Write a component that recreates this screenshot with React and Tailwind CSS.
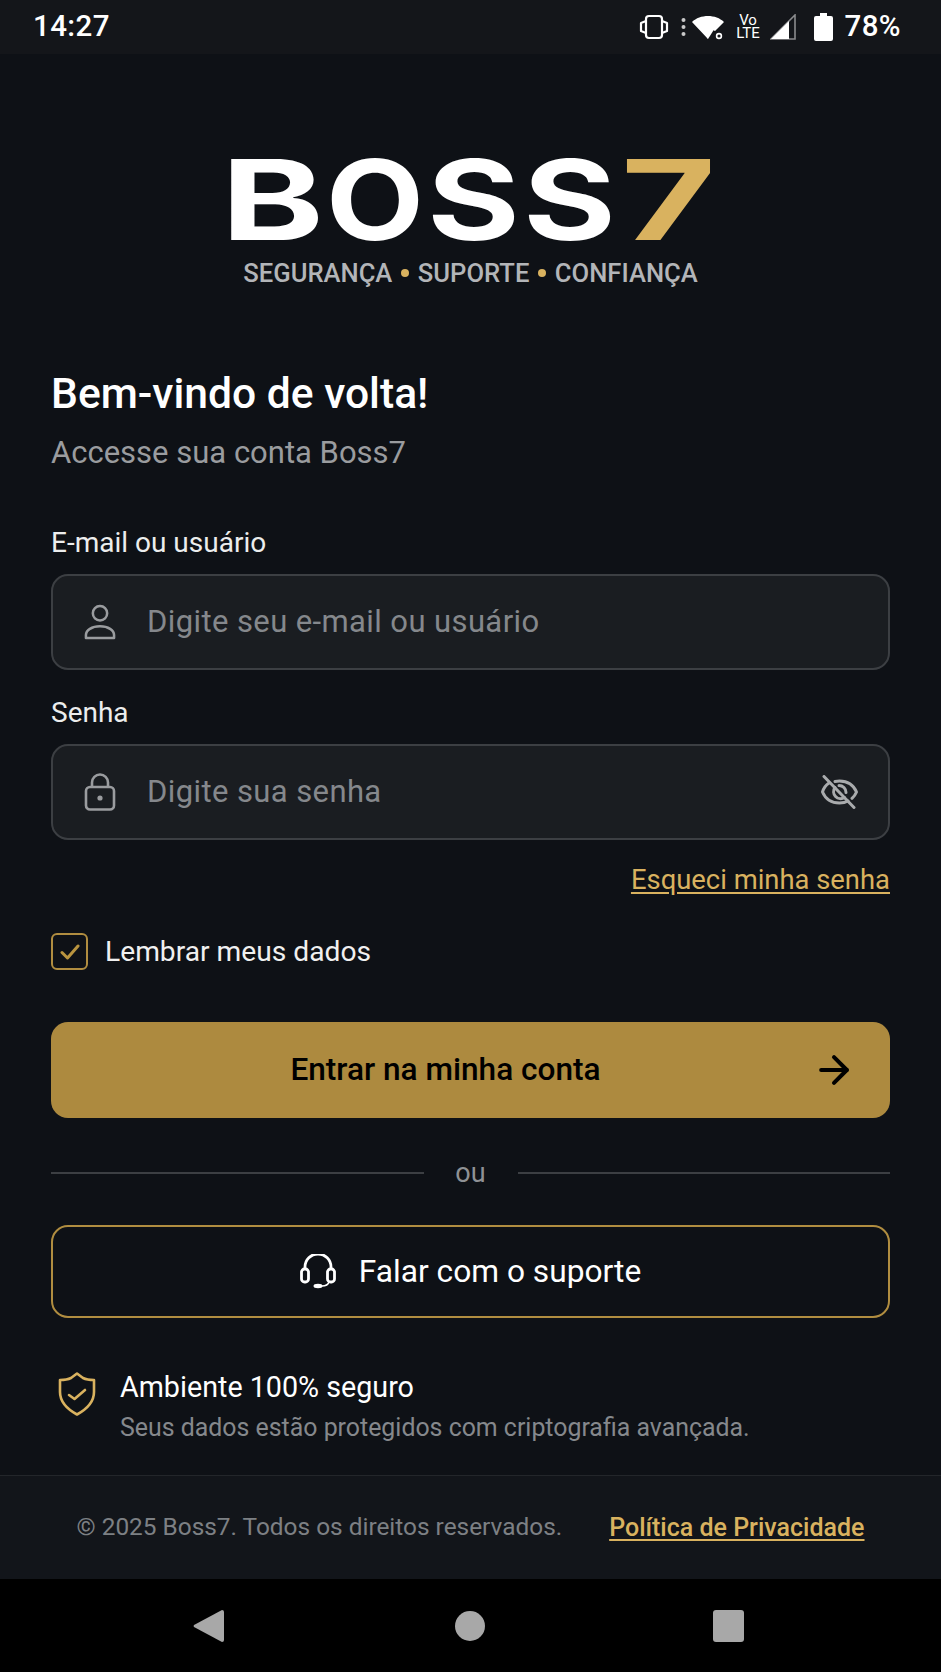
import { ArrowRight } from "lucide-react";

const GOLD = "#d9b25f";

function StatusBar() {
  return (
    <div className="h-[54px] shrink-0 bg-[#14161a] flex items-center justify-between pl-[33px] pr-[40px] text-white">
      <span className="text-[29.5px] leading-none font-medium tracking-[0.4px]">14:27</span>
      <div className="flex items-center">
        <svg width="30" height="26" viewBox="0 0 30 26" fill="none" stroke="white" strokeWidth="2.2">
          <rect x="7" y="2" width="16" height="22" rx="3" />
          <path d="M7 7 2 9v8l5 2M23 7l5 2v8l-5 2" strokeLinejoin="round" />
        </svg>
        <svg className="ml-[12px]" width="5" height="20" viewBox="0 0 5 20" fill="#c9c9c9">
          <circle cx="2.5" cy="3" r="2" />
          <circle cx="2.5" cy="10" r="2" />
          <circle cx="2.5" cy="17" r="2" />
        </svg>
        <svg className="ml-[5px]" width="34" height="26" viewBox="0 0 34 26" fill="white">
          <path d="M1 8C9 0 25 0 33 8L24 17A10 10 0 0 0 17 15V25Z" />
          <path d="M17 25 10 14Q17 9 24 14L17 25Z" />
          <circle cx="28" cy="22" r="2.4" fill="none" stroke="white" strokeWidth="1.6" />
        </svg>
        <div className="ml-[9px] w-[29px] flex flex-col items-center text-[15px] leading-[13px]">
          <span>Vo</span>
          <span>LTE</span>
        </div>
        <svg className="ml-[7px]" width="27" height="26" viewBox="0 0 27 26">
          <path d="M1 25 25 1V25Z" fill="none" stroke="#8a8b8d" strokeWidth="1.6" />
          <path d="M1 25 19 7V25Z" fill="white" />
        </svg>
        <svg className="ml-[17px]" width="19" height="28" viewBox="0 0 19 28" fill="white">
          <path d="M6 0h7v3h4a2 2 0 0 1 2 2v21a2 2 0 0 1-2 2H2a2 2 0 0 1-2-2V5a2 2 0 0 1 2-2h4Z" />
        </svg>
        <span className="ml-[12px] text-[29.5px] leading-none font-medium tracking-[0.4px]">78%</span>
      </div>
    </div>
  );
}

// wordmark: each letter is stretched to the slot it has in the logo
function Logo() {
  const letters = [
    { c: "B", x: -8, w: 103 },
    { c: "O", x: 97, w: 98 },
    { c: "S", x: 198, w: 93 },
    { c: "S", x: 294, w: 93 },
  ];
  return (
    <svg width="503" height="140" viewBox="-10 -30 503 140" className="block" role="img" aria-label="BOSS7">
      <g fontFamily="Inter, sans-serif" fontWeight="700" fontSize="111">
        {letters.map((l) => (
          <text
            key={l.x}
            x={l.x}
            y="81"
            fill="#ffffff"
            textLength={l.w}
            lengthAdjust="spacingAndGlyphs"
          >
            {l.c}
          </text>
        ))}
        <text x="392" y="81" fill={GOLD} textLength="95" lengthAdjust="spacingAndGlyphs">
          7
        </text>
      </g>
    </svg>
  );
}

function Dot() {
  return <span className="mx-[9px] w-[7.5px] h-[7.5px] rounded-full bg-[#d9b25f]" />;
}

function Field({ label, placeholder, icon, trailing }) {
  return (
    <div>
      <label className="block text-[28px] leading-[32px] text-[#eceded]">{label}</label>
      <div className="mt-[15px] h-[96px] rounded-[17px] border-2 border-[#3c3f43] bg-[#1a1d21] flex items-center pl-[31px] pr-[30px]">
        <span className="w-[32px] flex justify-center shrink-0">{icon}</span>
        <input
          placeholder={placeholder}
          className="ml-[31px] flex-1 min-w-0 bg-transparent outline-none text-[31px] tracking-[0.4px] text-white placeholder:text-[#85888c]"
        />
        {trailing}
      </div>
    </div>
  );
}

function UserIcon() {
  return (
    <svg width="33" height="36" viewBox="0 0 33 36" fill="none" stroke="#9a9c9f" strokeWidth="2.6" strokeLinejoin="round">
      <circle cx="16.5" cy="9" r="7.4" />
      <path d="M2 34.500v-3c0-5 6-9 14.500-9S31 26.500 31 31.500v3Z" />
    </svg>
  );
}

function LockIcon() {
  return (
    <svg width="32" height="38" viewBox="0 0 32 38" fill="none" stroke="#9a9c9f" strokeWidth="2.6" strokeLinejoin="round">
      <rect x="2" y="14" width="28" height="22.5" rx="4" />
      <path d="M8 14V9.500a8 8 0 0 1 16 0V14" />
      <circle cx="16" cy="25" r="2.6" fill="#9a9c9f" stroke="none" />
    </svg>
  );
}

function EyeOffIcon() {
  return (
    <svg width="37" height="34" viewBox="0 0 37 34" fill="none" stroke="#a9abad" strokeWidth="3" strokeLinecap="round" strokeLinejoin="round">
      <path d="M8 8C5 10 2.500 13.500 1.500 17c3 7 9.500 11 17 11 3 0 6-.6 8.500-2" />
      <path d="M14 6.500c1.500-.3 3-.5 4.500-.5 7.500 0 14 4 17 11-1 2.500-2.600 4.600-4.500 6.300" />
      <path d="M14 12.500a7 7 0 0 0 9.500 10" />
      <path d="M18 10.500a7 7 0 0 1 7 7" />
      <path d="M3 1.500 33 32.500" />
    </svg>
  );
}

function HeadsetIcon() {
  return (
    <svg width="36" height="36" viewBox="0 0 36 36" fill="none" stroke="white" strokeWidth="2.8" strokeLinejoin="round">
      <path d="M5 16v-3a13 13 0 0 1 26 0v3" />
      <rect x="1.500" y="15" width="7" height="13" rx="3" />
      <rect x="27.500" y="15" width="7" height="13" rx="3" />
      <ellipse cx="18" cy="32" rx="4.500" ry="2.200" fill="white" stroke="none" />
      <path d="M22 32c3 0 6-1 7-4" strokeWidth="1.600" />
    </svg>
  );
}

function ShieldIcon() {
  return (
    <svg width="38" height="44" viewBox="0 0 38 44" fill="none" stroke={GOLD} strokeWidth="2.6" strokeLinejoin="round" strokeLinecap="round">
      <path d="M19 1.500 25 6c3 1.500 7 2 11 2v12c0 10-7 17-17 22.500C9 37 2 30 2 20V8c4 0 8-.5 11-2Z" />
      <path d="M11 23l5.500 4L27 18" />
    </svg>
  );
}

export default function App() {
  return (
    <div className="w-[941px] h-[1672px] flex flex-col bg-[#0e1116] font-['Roboto',sans-serif] overflow-hidden">
      <StatusBar />

      <main className="flex-1 flex flex-col px-[51px]">
        <div className="mt-[75px] flex flex-col items-center">
          <Logo />
          <div className="-mt-[11px] flex items-center text-[25.6px] leading-[30px] font-medium text-[#b3b5b8]">
            <span>SEGURANÇA</span>
            <Dot />
            <span>SUPORTE</span>
            <Dot />
            <span>CONFIANÇA</span>
          </div>
        </div>

        <h1 className="mt-[82px] text-[42.6px] leading-[46px] font-medium text-white">Bem-vindo de volta!</h1>
        <p className="mt-[19px] text-[31px] leading-[36px] text-[#9a9c9f]">Accesse sua conta Boss7</p>

        <div className="mt-[56px]">
          <Field label="E-mail ou usuário" placeholder="Digite seu e-mail ou usuário" icon={<UserIcon />} />
        </div>
        <div className="mt-[27px]">
          <Field
            label="Senha"
            placeholder="Digite sua senha"
            icon={<LockIcon />}
            trailing={<EyeOffIcon />}
          />
        </div>

        <div className="mt-[22px] flex justify-end">
          <a className="text-[27.4px] leading-[36px] text-[#d9b25f] underline underline-offset-[3px]">Esqueci minha senha</a>
        </div>

        <label className="mt-[35px] flex items-center">
          <span className="w-[37px] h-[37px] rounded-[6px] border-[2.5px] border-[#b08d40] flex items-center justify-center">
            <svg width="20" height="16" viewBox="0 0 20 16" fill="none" stroke="#b9943f" strokeWidth="3" strokeLinecap="round" strokeLinejoin="round">
              <path d="M2 8.500 7.500 14 18 2" />
            </svg>
          </span>
          <span className="ml-[17px] text-[28.2px] leading-[36px] text-[#f0f0f0]">Lembrar meus dados</span>
        </label>

        <button className="mt-[52px] h-[96px] rounded-[17px] bg-[#ad8a3f] flex items-center pl-[24px] pr-[38px] text-black">
          <span className="flex-1 text-center text-[31.6px] font-medium">Entrar na minha conta</span>
          <ArrowRight size={44} strokeWidth={2.2} className="-mx-[4px]" />
        </button>

        <div className="mt-[38px] flex items-center">
          <div className="flex-1 h-[2px] bg-[#3c3f43]" />
          <span className="w-[94px] text-center text-[27px] leading-[34px] text-[#8f9195]">ou</span>
          <div className="flex-1 h-[2px] bg-[#3c3f43]" />
        </div>

        <button className="mt-[35px] h-[93px] rounded-[17px] border-2 border-[#b08d40] flex items-center justify-center text-white">
          <HeadsetIcon />
          <span className="ml-[23px] text-[31.7px]">Falar com o suporte</span>
        </button>

        <div className="mt-[52px] flex">
          <div className="ml-[7px] mt-[2px]">
            <ShieldIcon />
          </div>
          <div className="ml-[24px]">
            <div className="text-[28.7px] leading-[34px] text-white">Ambiente 100% seguro</div>
            <div className="mt-[9px] text-[24.9px] leading-[30px] text-[#85888c]">
              Seus dados estão protegidos com criptografia avançada.
            </div>
          </div>
        </div>
      </main>

      <footer className="h-[104px] shrink-0 bg-[#12151a] border-t border-[#23262a] flex items-center justify-center">
        <span className="text-[24.4px] text-[#7d8084]">© 2025 Boss7. Todos os direitos reservados.</span>
        <a className="ml-[47px] text-[25px] font-medium text-[#d9b25f] underline underline-offset-[3px]">Política de Privacidade</a>
      </footer>

      <nav className="h-[93px] shrink-0 bg-black flex items-center pl-[193px]">
        <svg width="31" height="34" viewBox="0 0 31 34" fill="#a8a8a8">
          <path d="M29 1a2 2 0 0 1 2 2v28a2 2 0 0 1-2 2L1 18a1.500 1.500 0 0 1 0-2Z" />
        </svg>
        <span className="ml-[231px] w-[30px] h-[30px] rounded-full bg-[#a8a8a8]" />
        <span className="ml-[228px] w-[31px] h-[32px] rounded-[3px] bg-[#a8a8a8]" />
      </nav>
    </div>
  );
}
